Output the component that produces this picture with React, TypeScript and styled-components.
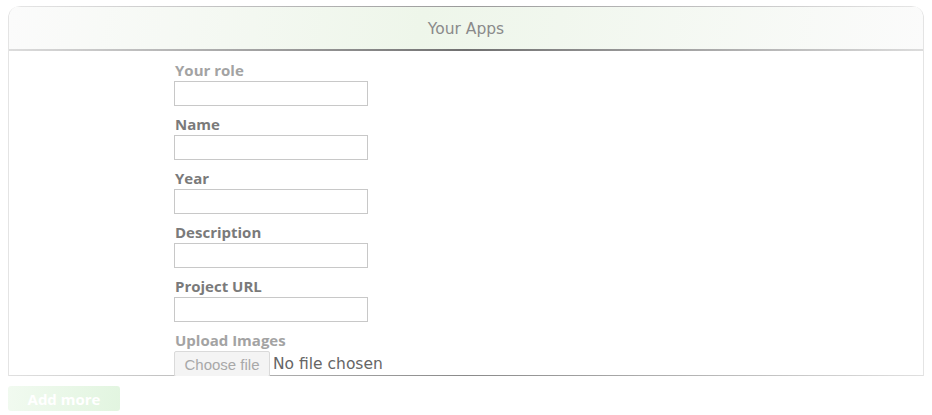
import React from 'react';
import styled, { createGlobalStyle } from 'styled-components';

const GlobalStyle = createGlobalStyle`
  body {
    margin: 0;
    padding: 6px 8px;
    background: #fff;
    font-family: 'Open Sans', 'Liberation Sans', sans-serif;
  }
`;

const Panel = styled.section`
  border: 1px solid #e4e4e4;
  border-top: none;
  border-bottom: none;
  border-radius: 12px 12px 0 0;
  overflow: hidden;
`;

const PanelHeader = styled.header`
  height: 45px;
  box-sizing: border-box;
  display: flex;
  align-items: center;
  justify-content: center;
  font-family: 'DejaVu Sans', 'Open Sans', sans-serif;
  font-size: 15.5px;
  color: #8a8a8a;
  border-radius: 12px 12px 0 0;
  background:
    linear-gradient(90deg, #e6e6e6, #9a9a9a 50%, #e6e6e6) top / 100% 1px no-repeat,
    linear-gradient(90deg, #dcdcdc, #707070 50%, #dcdcdc) bottom / 100% 2px no-repeat,
    linear-gradient(100deg, #fbfbfb 0%, #eef6ea 45%, #f1f7ee 60%, #fbfbfb 100%);
`;

const PanelBody = styled.div`
  height: 325px;
  overflow: hidden;
  padding: 11px 0 0 165px;
  box-sizing: border-box;
  background:
    linear-gradient(90deg, #e0e0e0, #8a8a8a 50%, #e0e0e0) bottom / 100% 1px no-repeat,
    #fff;
`;

const Field = styled.div`
  display: flex;
  flex-direction: column;
  align-items: flex-start;
  margin-bottom: 10px;
`;

const Label = styled.label<{ $muted?: boolean }>`
  font-family: 'Open Sans', sans-serif;
  font-weight: 700;
  font-size: 15px;
  line-height: 17px;
  color: ${p => (p.$muted ? '#a3a3a3' : '#7a7a7a')};
  margin-bottom: 2px;
  padding-left: 1px;
`;

const TextInput = styled.input`
  width: 194px;
  height: 25px;
  box-sizing: border-box;
  border: 1px solid #c8c8c8;
  border-radius: 0;
  padding: 2px 6px;
  outline: none;
  background: #fff;
`;

const FileRow = styled.div`
  display: flex;
  align-items: center;
  gap: 3px;
`;

const FileButton = styled.span`
  width: 96px;
  height: 26px;
  box-sizing: border-box;
  display: flex;
  align-items: center;
  justify-content: center;
  border: 1px solid #dadada;
  border-radius: 2px;
  background: #f4f4f4;
  font-family: 'Liberation Sans', Arial, sans-serif;
  font-size: 15px;
  color: #a8a8a8;
`;

const FileText = styled.span`
  font-family: 'DejaVu Sans', 'Open Sans', sans-serif;
  font-size: 15.5px;
  color: #666;
`;

const AddButton = styled.button`
  margin-top: 10px;
  width: 112px;
  height: 25px;
  border: none;
  border-radius: 3px;
  background: linear-gradient(100deg, #f1faf0, #e2f5e0);
  color: #fff;
  font-family: 'Open Sans', sans-serif;
  font-weight: 700;
  font-size: 15px;
  padding: 0;
`;

const fields = [
  { label: 'Your role', muted: true },
  { label: 'Name' },
  { label: 'Year' },
  { label: 'Description' },
  { label: 'Project URL' }
];

const App = () => {
  return (
    <>
      <GlobalStyle />
      <Panel>
        <PanelHeader>Your Apps</PanelHeader>
        <PanelBody>
          {fields.map(field => (
            <Field key={field.label}>
              <Label $muted={field.muted}>{field.label}</Label>
              <TextInput type="text" />
            </Field>
          ))}
          <Field>
            <Label $muted>Upload Images</Label>
            <FileRow>
              <FileButton>Choose file</FileButton>
              <FileText>No file chosen</FileText>
            </FileRow>
          </Field>
        </PanelBody>
      </Panel>
      <AddButton>Add more</AddButton>
    </>
  );
};

export default App;
